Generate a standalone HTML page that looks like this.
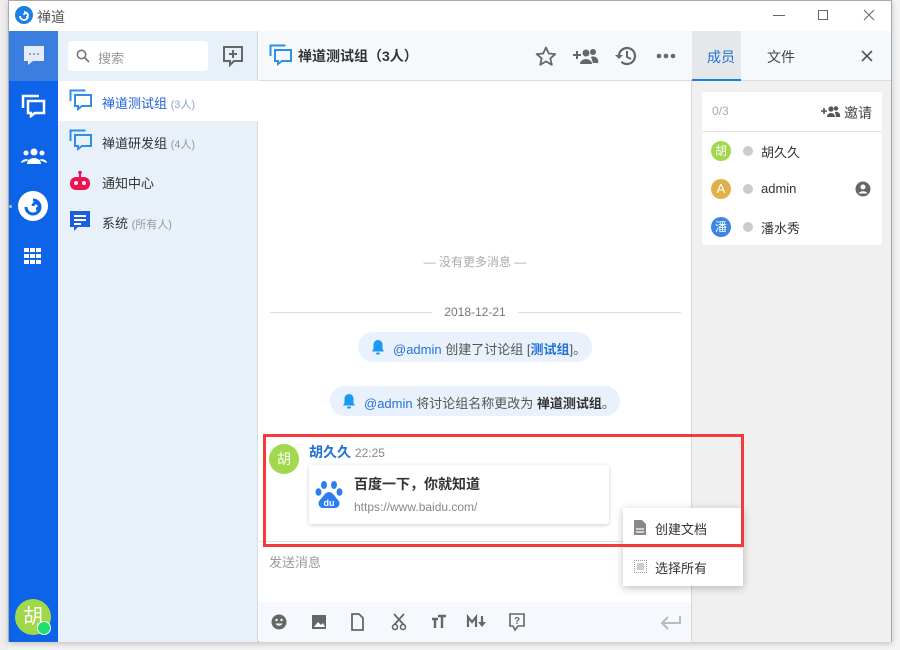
<!DOCTYPE html>
<html><head><meta charset="utf-8"><style>
*{margin:0;padding:0;box-sizing:border-box}
body{width:900px;height:650px;background:#f4f4f4;font-family:"Liberation Sans","Noto Sans CJK SC",sans-serif;position:relative;overflow:hidden;font-size:13px;color:#333}
.a{position:absolute}
.win{left:8px;top:0;width:884px;height:642px;background:#fff;border:1px solid #aaa;box-shadow:0 2px 6px rgba(0,0,0,.2)}
svg{display:block}
.ic{fill:#666}
</style></head><body>
<div class="a" style="left:0;top:0;width:8px;height:650px;background:#eee"></div>
<div class="a win"></div>
<!-- title bar -->
<div class="a" style="left:9px;top:1px;width:882px;height:30px;background:#fff"></div>
<svg class="a" style="left:15px;top:6px" width="18" height="18" viewBox="0 0 18 18"><circle cx="9" cy="9" r="9" fill="#1b7fe6"/><path d="M5 10a4 4 0 1 0 4-4M9 9a2 2 0 1 1 2 2" stroke="#fff" stroke-width="1.8" fill="none"/></svg>
<div class="a" style="left:37px;top:7px;font-size:14px;color:#555">禅道</div>
<div class="a" style="left:773px;top:15px;width:12px;height:1px;background:#666"></div>
<div class="a" style="left:818px;top:10px;width:10px;height:10px;border:1px solid #666"></div>
<svg class="a" style="left:863px;top:9px" width="12" height="12"><path d="M1 1L11 11M11 1L1 11" stroke="#666"/></svg>
<!-- nav -->
<div class="a" style="left:9px;top:31px;width:49px;height:611px;background:#0e64e8"></div>
<div class="a" style="left:9px;top:31px;width:49px;height:50px;background:#3c7de0"></div>
<svg class="a" style="left:22px;top:45px" width="24" height="22"><path d="M2 1h20v15H11l-5 4v-4H2z" fill="#e6ecf5"/><circle cx="8" cy="9" r="1" fill="#6b8fd0"/><circle cx="12" cy="9" r="1" fill="#6b8fd0"/><circle cx="16" cy="9" r="1" fill="#6b8fd0"/></svg>
<svg class="a" style="left:21px;top:94px" width="26" height="24"><path d="M2 14V2h16" stroke="#fff" stroke-width="2.5" fill="none"/><path d="M7 7h16v12h-9l-4 3v-3H7z" stroke="#fff" stroke-width="2.5" fill="none"/></svg>
<svg class="a" style="left:20px;top:147px" width="28" height="18"><circle cx="14" cy="5" r="3.5" fill="#fff"/><circle cx="6" cy="6" r="2.5" fill="#fff"/><circle cx="22" cy="6" r="2.5" fill="#fff"/><path d="M7 17a7 6 0 0 1 14 0z M1 16a5 4 0 0 1 8-3 M27 16a5 4 0 0 0-8-3" fill="#fff"/></svg>
<div class="a" style="left:9px;top:205px;width:3px;height:3px;border-radius:50%;background:#9cc0f5"></div>
<svg class="a" style="left:18px;top:191px" width="30" height="30"><circle cx="15" cy="15" r="15" fill="#fff"/><path d="M8 16a7 7 0 1 0 7-7M15 15a3 3 0 1 1 3 3" stroke="#0e64e8" stroke-width="3" fill="none"/></svg>
<svg class="a" style="left:24px;top:248px" width="18" height="18"><g fill="#fff"><rect x="0" y="0" width="5" height="4"/><rect x="6" y="0" width="5" height="4"/><rect x="12" y="0" width="5" height="4"/><rect x="0" y="6" width="5" height="4"/><rect x="6" y="6" width="5" height="4"/><rect x="12" y="6" width="5" height="4"/><rect x="0" y="12" width="5" height="4"/><rect x="6" y="12" width="5" height="4"/><rect x="12" y="12" width="5" height="4"/></g></svg>
<div class="a" style="left:15px;top:599px;width:36px;height:36px;border-radius:50%;background:#9fd94a;color:#fff;font-size:20px;text-align:center;line-height:36px">胡</div>
<div class="a" style="left:37px;top:621px;width:14px;height:14px;border-radius:50%;background:#1ee06a;border:1.5px solid #fff"></div>
<!-- chat list -->
<div class="a" style="left:58px;top:31px;width:200px;height:611px;background:#e8f0fa;border-right:1px solid #d5dbe3"></div>
<div class="a" style="left:68px;top:41px;width:140px;height:30px;background:#fff;border-radius:3px"></div>
<svg class="a" style="left:76px;top:49px" width="14" height="14"><circle cx="5.5" cy="5.5" r="4.2" stroke="#777" stroke-width="1.6" fill="none"/><path d="M8.5 8.5L13 13" stroke="#777" stroke-width="1.8"/></svg>
<div class="a" style="left:98px;top:48px;color:#999">搜索</div>
<svg class="a" style="left:222px;top:45px" width="22" height="22"><path d="M2 2h18v14h-8l-4 4v-4H2z" stroke="#666" stroke-width="2" fill="none"/><path d="M11 5v8M7 9h8" stroke="#666" stroke-width="2"/></svg>
<div class="a" style="left:58px;top:81px;width:200px;height:40px;background:#fff"></div>
<svg class="a" style="left:69px;top:89px" width="24" height="22"><path d="M1.5 12V1.5h15" stroke="#2e8ee8" stroke-width="2" fill="none"/><path d="M6 6h16v11h-9l-4 3v-3H6z" stroke="#2e8ee8" stroke-width="2" fill="none"/></svg>
<div class="a" style="left:102px;top:93px;font-size:13px;color:#2563d9">禅道测试组 <span style="font-size:11px;color:#8aa5d0">(3人)</span></div>
<svg class="a" style="left:69px;top:129px" width="24" height="22"><path d="M1.5 12V1.5h15" stroke="#2e8ee8" stroke-width="2" fill="none"/><path d="M6 6h16v11h-9l-4 3v-3H6z" stroke="#2e8ee8" stroke-width="2" fill="none"/></svg>
<div class="a" style="left:102px;top:133px;color:#333">禅道研发组 <span style="font-size:11px;color:#999">(4人)</span></div>
<svg class="a" style="left:69px;top:170px" width="22" height="22"><circle cx="11" cy="2.5" r="1.8" fill="#f0144e"/><rect x="10" y="3" width="2" height="4" fill="#f0144e"/><rect x="1" y="7" width="20" height="13" rx="6" fill="#f0144e"/><circle cx="7" cy="13" r="2" fill="#fff"/><circle cx="15" cy="13" r="2" fill="#fff"/></svg>
<div class="a" style="left:102px;top:173px;color:#333">通知中心</div>
<svg class="a" style="left:69px;top:210px" width="22" height="22"><path d="M1 1h20v16H9l-4 4v-4H1z" fill="#1d5ee0"/><path d="M5 6h12M5 10h12M5 14h7" stroke="#fff" stroke-width="2"/></svg>
<div class="a" style="left:102px;top:213px;color:#333">系统 <span style="font-size:11px;color:#999">(所有人)</span></div>
<!-- main header -->
<div class="a" style="left:259px;top:31px;width:432px;height:50px;background:#f6f9fc;border-bottom:1px solid #d8dde3"></div>
<svg class="a" style="left:269px;top:44px" width="24" height="22"><path d="M1.5 12V1.5h15" stroke="#2e8ee8" stroke-width="2" fill="none"/><path d="M6 6h16v11h-9l-4 3v-3H6z" stroke="#2e8ee8" stroke-width="2" fill="none"/></svg>
<div class="a" style="left:298px;top:46px;font-size:14px;font-weight:bold;color:#333">禅道测试组（3人）</div>
<svg class="a" style="left:535px;top:46px" width="22" height="20"><path d="M11 1.5l2.8 6 6.5.6-5 4.3 1.5 6.4L11 15.4l-5.8 3.4 1.5-6.4-5-4.3 6.5-.6z" stroke="#666" stroke-width="1.8" fill="none" stroke-linejoin="round"/></svg>
<svg class="a" style="left:573px;top:47px" width="26" height="18"><path d="M4 4v8M0 8h8" stroke="#666" stroke-width="2"/><circle cx="13" cy="6" r="3.5" fill="#666"/><circle cx="20" cy="5" r="3" fill="#666"/><path d="M7 17a6 5 0 0 1 12 0zM18 10a5 5 0 0 1 7 6h-5z" fill="#666"/></svg>
<svg class="a" style="left:614px;top:45px" width="24" height="22"><path d="M5 11a8 8 0 1 1 2.5 5.8" stroke="#666" stroke-width="2.2" fill="none"/><path d="M1 10l4 4 4-4z" fill="#666"/><path d="M13 6v6l4 2" stroke="#666" stroke-width="2" fill="none"/></svg>
<svg class="a" style="left:656px;top:53px" width="20" height="6"><circle cx="3" cy="3" r="2.3" fill="#666"/><circle cx="10" cy="3" r="2.3" fill="#666"/><circle cx="17" cy="3" r="2.3" fill="#666"/></svg>
<!-- messages -->
<div class="a" style="left:259px;top:253px;width:432px;text-align:center;font-size:12px;color:#aaa">— 没有更多消息 —</div>
<div class="a" style="left:270px;top:312px;width:162px;height:1px;background:#ddd"></div>
<div class="a" style="left:518px;top:312px;width:163px;height:1px;background:#ddd"></div>
<div class="a" style="left:430px;top:305px;width:90px;text-align:center;font-size:12px;color:#777">2018-12-21</div>
<div class="a" style="left:358px;top:332px;width:234px;height:30px;border-radius:15px;background:#e8f1fc"></div>
<svg class="a" style="left:371px;top:339px" width="14" height="16"><path d="M7 1a4.5 4.5 0 0 1 4.5 4.5V10l1.5 2.5H1L2.5 10V5.5A4.5 4.5 0 0 1 7 1z" fill="#1a9af0"/><rect x="5" y="13.5" width="4" height="2" rx="1" fill="#1a9af0"/></svg>
<div class="a" style="left:393px;top:339px;color:#555"><span style="color:#2472d6">@admin</span> 创建了讨论组 [<span style="color:#2472d6;font-weight:bold">测试组</span>]。</div>
<div class="a" style="left:330px;top:386px;width:290px;height:30px;border-radius:15px;background:#e8f1fc"></div>
<svg class="a" style="left:342px;top:393px" width="14" height="16"><path d="M7 1a4.5 4.5 0 0 1 4.5 4.5V10l1.5 2.5H1L2.5 10V5.5A4.5 4.5 0 0 1 7 1z" fill="#1a9af0"/><rect x="5" y="13.5" width="4" height="2" rx="1" fill="#1a9af0"/></svg>
<div class="a" style="left:364px;top:393px;color:#555"><span style="color:#2472d6">@admin</span> 将讨论组名称更改为 <b style="color:#333">禅道测试组</b>。</div>
<div class="a" style="left:269px;top:444px;width:30px;height:30px;border-radius:50%;background:#a1d84e;color:#fff;text-align:center;line-height:30px;font-size:14px">胡</div>
<div class="a" style="left:309px;top:442px;font-size:14px;font-weight:bold;color:#1f6fdc">胡久久 <span style="font-weight:normal;font-size:12px;color:#888">22:25</span></div>
<div class="a" style="left:309px;top:465px;width:300px;height:59px;background:#fff;border-radius:3px;box-shadow:0 1px 4px rgba(0,0,0,.2)"></div>
<svg class="a" style="left:315px;top:480px" width="28" height="30" viewBox="0 0 28 30"><g fill="#2b7ef0"><ellipse cx="9" cy="5" rx="3" ry="4"/><ellipse cx="19" cy="5" rx="3" ry="4"/><ellipse cx="3.5" cy="12" rx="3" ry="3.8"/><ellipse cx="24.5" cy="12" rx="3" ry="3.8"/><path d="M14 12c-4 0-6 5-9 8-3 3-1 8 3 8h12c4 0 6-5 3-8-3-3-5-8-9-8z"/></g><text x="14" y="26" font-size="9" fill="#fff" text-anchor="middle" font-family="Liberation Sans" font-weight="bold">du</text></svg>
<div class="a" style="left:354px;top:474px;font-size:14px;font-weight:bold;color:#333">百度一下，你就知道</div>
<div class="a" style="left:354px;top:500px;font-size:12px;color:#888">https://www.baidu.com/</div>
<!-- separator + input -->
<div class="a" style="left:259px;top:541px;width:432px;height:1px;background:#dde1e6"></div>
<div class="a" style="left:269px;top:552px;color:#999">发送消息</div>
<div class="a" style="left:259px;top:602px;width:432px;height:40px;background:#f5f8fc"></div>
<svg class="a" style="left:270px;top:612px" width="280" height="20">
<circle cx="9" cy="10" r="7.5" fill="#666"/><circle cx="6.5" cy="8" r="1.2" fill="#fff"/><circle cx="11.5" cy="8" r="1.2" fill="#fff"/><path d="M5.5 11.5a3.8 3.5 0 0 0 7 0z" fill="#fff"/>
<rect x="42" y="3" width="14" height="14" fill="#666"/><path d="M44 15l4-5 3 3 2-2 2 4z" fill="#fff"/>
<path d="M82 2h7l4 4v12H82z" stroke="#666" stroke-width="1.8" fill="none"/>
<circle cx="125" cy="15" r="2.5" stroke="#666" stroke-width="1.6" fill="none"/><circle cx="133" cy="15" r="2.5" stroke="#666" stroke-width="1.6" fill="none"/><path d="M124 2l10 11M134 2l-10 11" stroke="#666" stroke-width="1.8"/>
<path d="M162 7h6M165 7v9M168 4h8M172 4v12" stroke="#666" stroke-width="2.4"/>
<path d="M198 15V5l4 5 4-5v10" stroke="#666" stroke-width="2.2" fill="none"/><path d="M212 4v7" stroke="#666" stroke-width="2.2"/><path d="M208 10h8l-4 5z" fill="#666"/>
<path d="M240 2h14v12h-6l-3 4-2-4h-3z" stroke="#666" stroke-width="1.6" fill="none"/><text x="247" y="12" font-size="10" fill="#666" text-anchor="middle" font-family="Liberation Sans" font-weight="bold">?</text>
</svg>
<svg class="a" style="left:659px;top:614px" width="24" height="16"><path d="M21 2v7H4M9 3L3 9l6 6" stroke="#bbb" stroke-width="2" fill="none"/></svg>
<!-- right panel -->
<div class="a" style="left:691px;top:31px;width:200px;height:611px;background:#f0f0f0;border-left:1px solid #d8d8d8"></div>
<div class="a" style="left:691px;top:31px;width:200px;height:50px;background:#f6f9fc;border-bottom:1px solid #d8dde3"></div>
<div class="a" style="left:692px;top:31px;width:49px;height:50px;background:#e5e8eb;border-bottom:2px solid #1a7ee6"></div>
<div class="a" style="left:707px;top:47px;font-size:14px;color:#1f6fdc">成员</div>
<div class="a" style="left:767px;top:47px;font-size:14px;color:#444">文件</div>
<svg class="a" style="left:861px;top:50px" width="12" height="12"><path d="M1 1L11 11M11 1L1 11" stroke="#555" stroke-width="1.6"/></svg>
<div class="a" style="left:702px;top:92px;width:180px;height:153px;background:#fff;border-radius:3px"></div>
<div class="a" style="left:702px;top:131px;width:180px;height:1px;background:#e3e3e3"></div>
<div class="a" style="left:712px;top:104px;font-size:12px;color:#aaa">0/3</div>
<svg class="a" style="left:821px;top:105px" width="20" height="12"><path d="M3 3v6M0 6h6" stroke="#555" stroke-width="1.6"/><circle cx="10" cy="4" r="2.6" fill="#555"/><circle cx="15" cy="3.5" r="2.2" fill="#555"/><path d="M6 12a4 4 0 0 1 8 0zM14 7a4 4 0 0 1 5 5h-4z" fill="#555"/></svg>
<div class="a" style="left:844px;top:103px;font-size:14px;color:#444">邀请</div>
<div class="a" style="left:711px;top:141px;width:20px;height:20px;border-radius:50%;background:#a1d84e;color:#fff;font-size:12px;text-align:center;line-height:20px">胡</div>
<div class="a" style="left:743px;top:146px;width:10px;height:10px;border-radius:50%;background:#ccc"></div>
<div class="a" style="left:761px;top:142px;color:#333">胡久久</div>
<div class="a" style="left:711px;top:179px;width:20px;height:20px;border-radius:50%;background:#e0b04a;color:#fff;font-size:13px;text-align:center;line-height:20px">A</div>
<div class="a" style="left:743px;top:184px;width:10px;height:10px;border-radius:50%;background:#ccc"></div>
<div class="a" style="left:761px;top:181px;color:#333">admin</div>
<svg class="a" style="left:855px;top:181px" width="16" height="16"><circle cx="8" cy="8" r="7.5" fill="#666"/><circle cx="8" cy="6" r="2.5" fill="#fff"/><path d="M3.5 12.5a5 4 0 0 1 9 0z" fill="#fff"/></svg>
<div class="a" style="left:711px;top:217px;width:20px;height:20px;border-radius:50%;background:#3c86e0;color:#fff;font-size:12px;text-align:center;line-height:20px">潘</div>
<div class="a" style="left:743px;top:222px;width:10px;height:10px;border-radius:50%;background:#ccc"></div>
<div class="a" style="left:761px;top:218px;color:#333">潘水秀</div>
<!-- context menu -->
<div class="a" style="left:623px;top:508px;width:120px;height:78px;background:#fff;box-shadow:0 2px 8px rgba(0,0,0,.25)"></div>
<div class="a" style="left:623px;top:547px;width:120px;height:1px;background:#e5e5e5"></div>
<svg class="a" style="left:634px;top:520px" width="12" height="15"><path d="M0 0h8l4 4v11H0z" fill="#888"/><path d="M2 9h8M2 12h8" stroke="#fff" stroke-width="1.2"/></svg>
<div class="a" style="left:655px;top:519px;color:#333">创建文档</div>
<div class="a" style="left:634px;top:560px;width:13px;height:13px;border:1px dotted #999"></div>
<div class="a" style="left:637px;top:563px;width:7px;height:7px;background:#ccc"></div>
<div class="a" style="left:655px;top:558px;color:#333">选择所有</div>
<!-- red highlight -->
<div class="a" style="left:263px;top:434px;width:481px;height:113px;border:3px solid #f23a3a"></div>
</body></html>
